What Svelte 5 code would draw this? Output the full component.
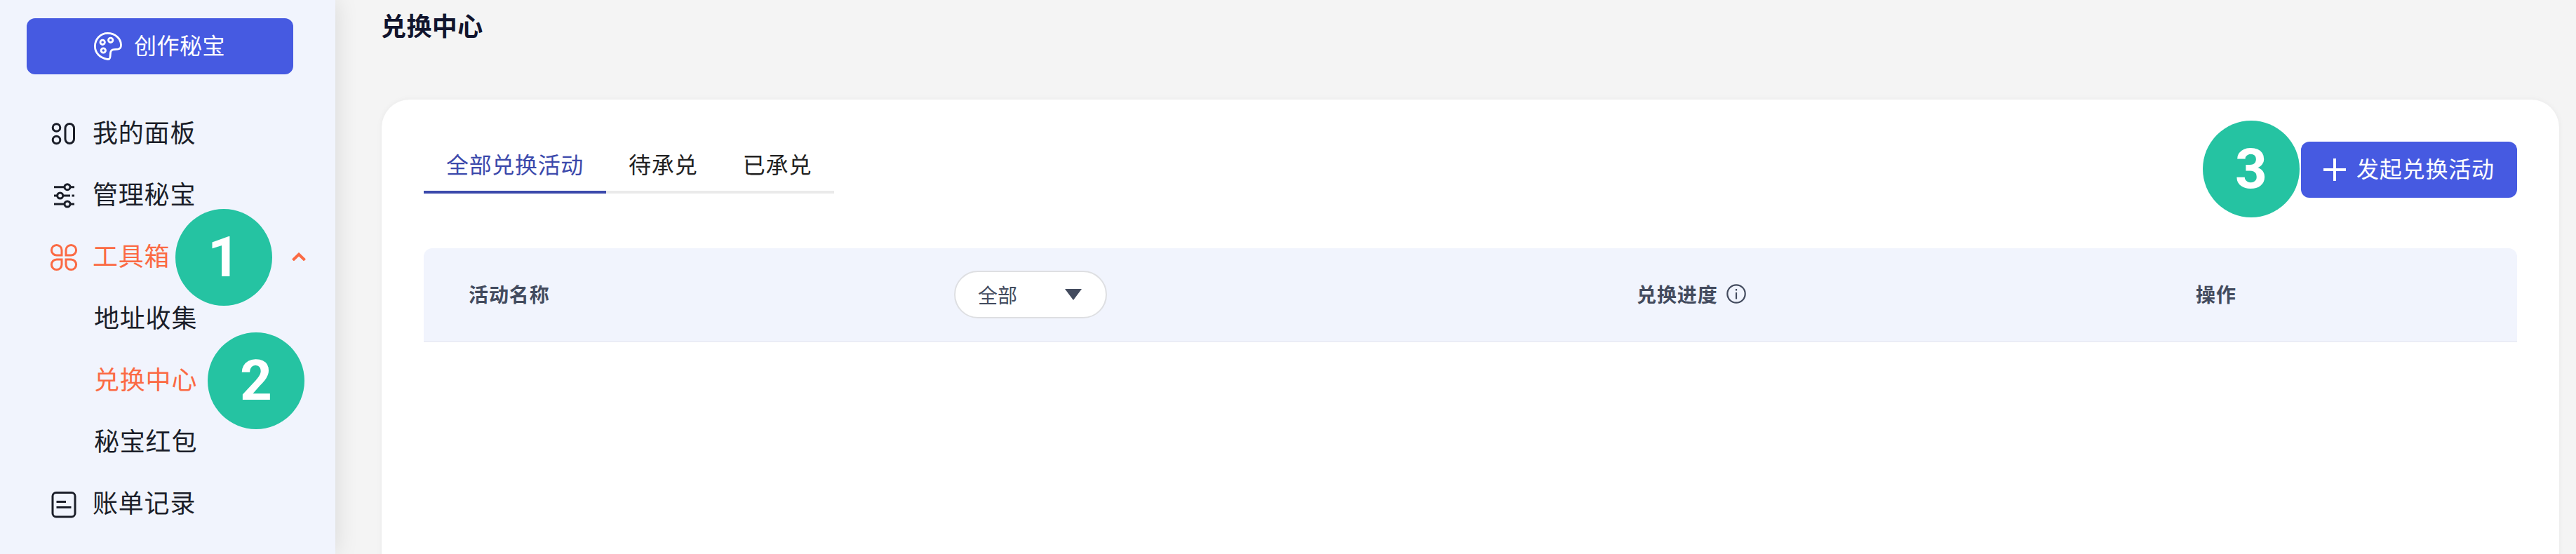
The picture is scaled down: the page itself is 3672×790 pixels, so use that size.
<script>
  const menu = [
    { label: '我的面板', icon: 'panel' },
    { label: '管理秘宝', icon: 'sliders' },
    { label: '工具箱', icon: 'tools', active: true, open: true, step: 1 },
    { label: '地址收集', child: true },
    { label: '兑换中心', child: true, active: true, step: 2 },
    { label: '秘宝红包', child: true },
    { label: '账单记录', icon: 'bill' }
  ];
  const tabs = ['全部兑换活动', '待承兑', '已承兑'];
  let current = $state(0);
</script>

<div class="page">
  <aside>
    <button class="primary create">
      <svg width="42" height="42" viewBox="0 0 42 42" fill="none" stroke="currentColor" stroke-width="2.8" stroke-linejoin="round">
        <path d="M20.500 2.400C31 2.400 39.500 10 39.500 19C39.500 23 38.500 24.700 35 25.200L29.500 25.700C26.500 26 24.700 27.500 24.500 30.500L24 36C23.800 39 22.500 40 19.500 39.300C10 37.500 2.400 31 2.400 21C2.400 10.500 10.500 2.400 20.500 2.400Z" />
        <circle cx="13.200" cy="15.300" r="3.200" /><circle cx="24.700" cy="12.300" r="3.200" /><circle cx="14.300" cy="27" r="3.200" />
      </svg>
      <span>创作秘宝</span>
    </button>
    <nav>
      {#each menu as item}
        <a class:active={item.active} class:child={item.child}>
          {#if item.icon}
            <svg class="icon" width="40" height="42" viewBox="0 0 40 42" fill="none" stroke="currentColor" stroke-width="3">
              {#if item.icon === 'panel'}
                <circle cx="9.500" cy="13" r="5.300" /><circle cx="9.500" cy="30.500" r="5.300" />
                <rect x="22" y="7.500" width="12.500" height="28" rx="6.250" />
              {:else if item.icon === 'sliders'}
                <path d="M6 9.700H20M30 9.700H35M6 22H10M20 22H29M31.500 22H35M6 34H20M30 34H35" />
                <circle cx="25" cy="9.700" r="4" /><circle cx="14.700" cy="22" r="4" /><circle cx="25" cy="34" r="4" />
              {:else if item.icon === 'tools'}
                <path d="M17 19H9.700A7.300 7.300 0 1 1 17 11.700ZM23 19H30.300A7.300 7.300 0 1 0 23 11.700ZM17 25H9.700A7.300 7.300 0 1 0 17 32.300ZM23 25H30.300A7.300 7.300 0 1 1 23 32.300Z" />
              {:else}
                <rect x="4" y="5.500" width="32" height="34.500" rx="5" /><path d="M9.500 18.500H23M9.500 26.500H30.500" />
              {/if}
            </svg>
          {/if}
          <span>{item.label}</span>
          {#if item.open}
            <svg class="caret" width="20" height="12" viewBox="0 0 20 12" fill="none" stroke="currentColor" stroke-width="4"><path d="M1.500 11L10 2.700L18.500 11" /></svg>
          {/if}
          {#if item.step}<b class="step s{item.step}">{item.step}</b>{/if}
        </a>
      {/each}
    </nav>
  </aside>

  <main>
    <h1>兑换中心</h1>
    <section>
      <div class="bar">
        <div class="tabs">
          {#each tabs as tab, i}
            <button class:selected={current === i} onclick={() => (current = i)}>{tab}</button>
          {/each}
        </div>
        <button class="primary launch">
          <svg width="32" height="32" viewBox="0 0 32 32" stroke="currentColor" stroke-width="4"><path d="M0 16H32M16 0V32" /></svg>
          <span>发起兑换活动</span>
          <b class="step s3">3</b>
        </button>
      </div>
      <div class="head">
        <span>活动名称</span>
        <div>
          <button class="select">全部
            <svg width="24" height="16" viewBox="0 0 24 16" fill="currentColor"><path d="M0 0H24L12 16Z" /></svg>
          </button>
        </div>
        <span class="progress">兑换进度
          <svg width="28" height="28" viewBox="0 0 28 28" fill="none" stroke="currentColor" stroke-width="2.200"><circle cx="14" cy="14" r="12.700" /><path d="M14 12V21.500M14 7V9.500" /></svg>
        </span>
        <span>操作</span>
      </div>
    </section>
  </main>
</div>

<style>
  :global(body) { margin: 0; overflow: hidden; }
  .page {
    display: flex; width: 3672px; height: 790px; overflow: hidden; background: #f4f4f4;
    font-family: "Noto Sans CJK SC", sans-serif; color: #1b1e29;
  }
  button { font: inherit; color: inherit; border: 0; background: none; padding: 0; }
  svg { display: block; flex: none; }
  aside {
    box-sizing: border-box; width: 478px; flex: none; padding: 26px 60px 0 38px;
    background: #f1f4fd; box-shadow: 0 0 32px rgba(0, 0, 0, 0.12); z-index: 1;
  }
  .primary {
    display: flex; align-items: center; box-sizing: border-box; height: 80px; color: #fff;
    background: #465ae1; border-radius: 12px; font-size: 32px; letter-spacing: 0.8px;
  }
  .primary span { padding-bottom: 7px; }
  .create { width: 380px; padding-left: 95px; gap: 16px; letter-spacing: 0.5px; }
  nav { display: flex; flex-direction: column; margin: 40px -60px 0 -38px; }
  nav a {
    position: relative; display: flex; align-items: center; box-sizing: border-box;
    height: 88px; padding: 0 42px 0 71px; font-size: 36px; letter-spacing: 0.8px; line-height: 1;
  }
  nav a .icon { margin-right: 21px; }
  nav a span { padding-bottom: 7px; }
  nav a.child { padding-left: 134px; }
  .active { color: #fb6a44; }
  .caret { margin-left: auto; }
  .step {
    position: absolute; width: 138px; height: 138px; border-radius: 50%; background: #25c3a2;
    color: #fff; font: 700 80px/138px Roboto, sans-serif; text-align: center; letter-spacing: 0;
  }
  .s1 { left: 250px; top: -24px; }
  .s2 { left: 296px; top: -24px; }
  .s3 { left: -140px; top: -30px; }
  main { flex: 1; padding: 0 24px 0 66px; }
  h1 { margin: 0 0 0 -1px; height: 142px; font-size: 36px; font-weight: 700; line-height: 70px; letter-spacing: 0.4px; color: #11142d; }
  section {
    box-sizing: border-box; height: 700px; padding: 60px 60px 0; background: #fff;
    border-radius: 40px; box-shadow: 0 0 8px rgba(0, 0, 0, 0.05);
  }
  .bar { display: flex; justify-content: space-between; align-items: flex-start; height: 152px; }
  .tabs { display: flex; }
  .tabs button {
    height: 74px; padding: 0 32px; border-bottom: 4px solid #eaeaea; box-sizing: border-box;
    font-size: 32px; letter-spacing: 0.9px; line-height: 63px; color: #222;
    display: flex; align-items: flex-start;
  }
  .tabs .selected { color: #3b49ab; border-color: #3b49ab; letter-spacing: 0.66px; }
  .launch { position: relative; width: 308px; padding-left: 32px; gap: 15px; }
  .head {
    display: grid; grid-template-columns: 692px 973px 797px 1fr; align-items: center;
    box-sizing: border-box; height: 134px; padding-left: 64px; background: #f1f4fd;
    border-bottom: 2px solid #ebedf6; border-radius: 12px 12px 0 0;
    font-size: 28px; font-weight: 700; letter-spacing: 0.9px; color: #434b5e;
  }
  .head > span { padding-bottom: 2px; }
  .select {
    display: flex; align-items: center; justify-content: space-between; box-sizing: border-box;
    width: 218px; height: 68px; padding: 0 34px 0 32px; border: 2px solid #dedfe2;
    border-radius: 34px; background: #fff; font-weight: 400; letter-spacing: 0; line-height: 60px;
  }
  .progress { display: flex; align-items: center; gap: 12px; }
</style>
